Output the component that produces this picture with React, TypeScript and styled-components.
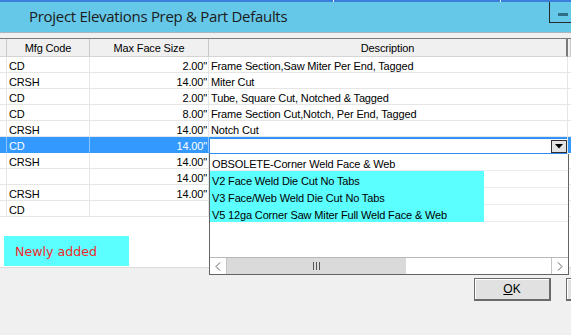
import React from "react";
import styled, { createGlobalStyle } from "styled-components";

const Global = createGlobalStyle`
  html, body { margin: 0; padding: 0; background: #f0f0f0; }
  body { font-family: "Liberation Sans", Arial, sans-serif; }
`;

const Window = styled.div`
  width: 571px;
  height: 335px;
  overflow: hidden;
  display: flex;
  flex-direction: column;
  background: #f0f0f0;
`;

const TopStrip = styled.div`
  height: 2px;
  display: flex;
  background: #3a7fdc;
`;

const StripCell = styled.div<{ $w: number }>`
  width: ${(p) => p.$w}px;
  flex: none;
  border-right: 1px solid #ffffff;
`;

const TitleBar = styled.div`
  height: 30px;
  display: flex;
  align-items: flex-start;
  background: #66c8e8;
  border-bottom: 1px solid #a7b5bd;
`;

const TitleText = styled.div`
  flex: 1;
  padding-left: 29px;
  line-height: 29px;
  font-family: "Open Sans", "Noto Sans", sans-serif;
  font-size: 15px;
  letter-spacing: -0.3px;
  color: #1b1b1b;
  white-space: nowrap;
`;

const MinButton = styled.div`
  width: 22px;
  height: 21px;
  box-sizing: border-box;
  flex: none;
  border-left: 1px solid #2a2a2a;
  border-bottom: 1px solid #2a2a2a;
  padding: 11px 0 0 8px;
`;

const MinDash = styled.div`
  width: 10px;
  height: 3px;
  background: #2f6f86;
`;

const Gap = styled.div`
  height: 5px;
`;

const Grid = styled.div`
  position: relative;
  height: 230px;
  box-sizing: border-box;
  flex: none;
  display: flex;
  flex-direction: column;
  background: #ffffff;
  border-top: 1px solid #7a7a7a;
  border-bottom: 1px solid #dcdcdc;
  font-size: 11px;
  letter-spacing: -0.15px;
  color: #000;
`;

const cols = "7px 83px 119px 359px 1fr";

const HeaderRow = styled.div`
  display: grid;
  grid-template-columns: ${cols};
  height: 18px;
  flex: none;
`;

const HeaderCell = styled.div<{ $dark?: boolean }>`
  box-sizing: border-box;
  background: #f0f0f0;
  border-right: ${(p) => (p.$dark ? "2px solid #7a7a7a" : "1px solid #c9c9c9")};
  border-bottom: 1px solid #d5d5d5;
  padding-top: 2px;
  text-align: center;
  line-height: 15px;
  white-space: nowrap;
  overflow: hidden;
`;

const Row = styled.div<{ $selected?: boolean }>`
  display: grid;
  grid-template-columns: ${cols};
  height: 16px;
  flex: none;
  background: ${(p) => (p.$selected ? "#3399ff" : "#ffffff")};
  color: ${(p) => (p.$selected ? "#ffffff" : "#000000")};
`;

const Cell = styled.div<{ $align?: "left" | "right"; $sel?: boolean }>`
  position: relative;
  box-sizing: border-box;
  height: 16px;
  border-right: 1px solid ${(p) => (p.$sel ? "#8cc4ff" : "#e6e6e6")};
  border-bottom: 1px solid ${(p) => (p.$sel ? "#3399ff" : "#e6e6e6")};
  padding: 2px 1px 0 2px;
  text-align: ${(p) => p.$align ?? "left"};
  line-height: 15px;
  white-space: nowrap;
  overflow: visible;
`;

const Combo = styled.div`
  position: absolute;
  left: 0;
  top: 1px;
  right: 0;
  height: 16px;
  box-sizing: border-box;
  display: flex;
  background: #ffffff;
  border: 1px solid #2f8cf0;
  border-right: none;
`;

const ComboInput = styled.div`
  flex: 1;
`;

const ComboButton = styled.div`
  width: 16px;
  box-sizing: border-box;
  margin-top: 1px;
  background: #e3e3e3;
  border: 1px solid #303030;
  display: flex;
  align-items: center;
  justify-content: center;
`;

const Footer = styled.div`
  flex: 1;
  padding: 19px 0 0 4px;
`;

const NewlyAdded = styled.div`
  width: 125px;
  height: 30px;
  box-sizing: border-box;
  padding-left: 11px;
  line-height: 31px;
  background: #5cffff;
  color: #f2292e;
  font-family: "DejaVu Sans", Verdana, sans-serif;
  font-size: 12.6px;
  letter-spacing: 0;
`;

const DropList = styled.div`
  position: absolute;
  left: 209px;
  top: 115px;
  width: 360px;
  height: 121px;
  box-sizing: border-box;
  display: flex;
  flex-direction: column;
  background: #ffffff;
  border: 1px solid #646464;
  border-top: none;
  color: #000;
`;

const ListItem = styled.div`
  height: 17px;
  flex: none;
  display: flex;
  box-shadow: inset 0 -1px #ebebeb;
`;

const ItemLabel = styled.div<{ $fresh?: boolean }>`
  width: 274px;
  height: 17px;
  padding: 2px 0 0 2px;
  box-sizing: border-box;
  line-height: 16px;
  white-space: nowrap;
  background: ${(p) => (p.$fresh ? "#5cffff" : "transparent")};
`;

const ListSpacer = styled.div`
  flex: 1;
`;

const HScroll = styled.div`
  height: 17px;
  flex: none;
  box-sizing: border-box;
  display: flex;
  border-top: 1px solid #b8b8b8;
  background: #ffffff;
`;

const ScrollArrow = styled.div<{ $side: "left" | "right" }>`
  width: 17px;
  flex: none;
  box-sizing: border-box;
  display: flex;
  align-items: center;
  justify-content: center;
  ${(p) => (p.$side === "left" ? "border-right: 1px solid #c4c4c4;" : "border-left: 1px solid #c4c4c4;")}
`;

const ScrollThumb = styled.div`
  width: 179px;
  flex: none;
  background: #dadada;
  display: flex;
  align-items: center;
  justify-content: center;
`;

const ScrollTrack = styled.div`
  flex: 1;
`;

const BottomArea = styled.div`
  flex: 1;
  padding: 10px 0 0 474px;
  display: flex;
  gap: 15px;
  align-items: flex-start;
`;

const Button = styled.button`
  width: 77px;
  height: 23px;
  flex: none;
  box-sizing: border-box;
  padding: 0;
  background: #e1e1e1;
  border: 1px solid #6a6a6a;
  border-right-width: 2px;
  border-bottom-width: 2px;
  box-shadow: inset 1px 1px #ffffff;
  font-family: "Liberation Sans", Arial, sans-serif;
  font-size: 12px;
  color: #000;
`;

const Mnemonic = styled.span`
  text-decoration: underline;
`;

type RowData = { code: string; size: string; desc: string; selected?: boolean };

const rows: RowData[] = [
  { code: "CD", size: '2.00"', desc: "Frame Section,Saw Miter Per End, Tagged" },
  { code: "CRSH", size: '14.00"', desc: "Miter Cut" },
  { code: "CD", size: '2.00"', desc: "Tube, Square Cut, Notched & Tagged" },
  { code: "CD", size: '8.00"', desc: "Frame Section Cut,Notch, Per End, Tagged" },
  { code: "CRSH", size: '14.00"', desc: "Notch Cut" },
  { code: "CD", size: '14.00"', desc: "", selected: true },
  { code: "CRSH", size: '14.00"', desc: "" },
  { code: "", size: '14.00"', desc: "" },
  { code: "CRSH", size: '14.00"', desc: "" },
  { code: "CD", size: "", desc: "" },
];

const items = [
  { label: "OBSOLETE-Corner Weld Face & Web", fresh: false },
  { label: "V2 Face Weld Die Cut No Tabs", fresh: true },
  { label: "V3 Face/Web Weld Die Cut No Tabs", fresh: true },
  { label: "V5 12ga Corner Saw Miter Full Weld Face & Web", fresh: true },
];

const Chevron = ({ dir }: { dir: "left" | "right" }) => (
  <svg width="6" height="9" viewBox="0 0 6 9">
    <polyline
      points={dir === "left" ? "5,0.5 1,4.5 5,8.5" : "1,0.5 5,4.5 1,8.5"}
      fill="none"
      stroke="#606060"
      strokeWidth="1"
    />
  </svg>
);

const Grip = () => (
  <svg width="7" height="8" viewBox="0 0 7 8">
    <rect x="0" y="0" width="1" height="8" fill="#555" />
    <rect x="3" y="0" width="1" height="8" fill="#555" />
    <rect x="6" y="0" width="1" height="8" fill="#555" />
  </svg>
);

const DownTriangle = () => (
  <svg width="8" height="5" viewBox="0 0 8 5">
    <polygon points="0,0 8,0 4,4.5" fill="#000" />
  </svg>
);

export default function App() {
  return (
    <>
      <Global />
      <Window>
        <TopStrip>
          <StripCell $w={333} />
          <StripCell $w={166} />
        </TopStrip>
        <TitleBar>
          <TitleText>Project Elevations Prep &amp; Part Defaults</TitleText>
          <MinButton>
            <MinDash />
          </MinButton>
        </TitleBar>
        <Gap />
        <Grid>
          <HeaderRow>
            <HeaderCell />
            <HeaderCell>Mfg Code</HeaderCell>
            <HeaderCell>Max Face Size</HeaderCell>
            <HeaderCell $dark>Description</HeaderCell>
            <HeaderCell />
          </HeaderRow>
          {rows.map((r, i) => (
            <Row key={i} $selected={r.selected}>
              <Cell $sel={r.selected} />
              <Cell $sel={r.selected}>{r.code}</Cell>
              <Cell $sel={r.selected} $align="right">
                {r.size}
              </Cell>
              <Cell>
                {r.selected ? (
                  <Combo>
                    <ComboInput />
                    <ComboButton>
                      <DownTriangle />
                    </ComboButton>
                  </Combo>
                ) : (
                  r.desc
                )}
              </Cell>
              <Cell $sel={r.selected} />
            </Row>
          ))}
          <Footer>
            <NewlyAdded>Newly added</NewlyAdded>
          </Footer>
          <DropList>
            {items.map((it) => (
              <ListItem key={it.label}>
                <ItemLabel $fresh={it.fresh}>{it.label}</ItemLabel>
              </ListItem>
            ))}
            <ListSpacer />
            <HScroll>
              <ScrollArrow $side="left">
                <Chevron dir="left" />
              </ScrollArrow>
              <ScrollThumb>
                <Grip />
              </ScrollThumb>
              <ScrollTrack />
              <ScrollArrow $side="right">
                <Chevron dir="right" />
              </ScrollArrow>
            </HScroll>
          </DropList>
        </Grid>
        <BottomArea>
          <Button>
            <Mnemonic>O</Mnemonic>K
          </Button>
          <Button />
        </BottomArea>
      </Window>
    </>
  );
}
